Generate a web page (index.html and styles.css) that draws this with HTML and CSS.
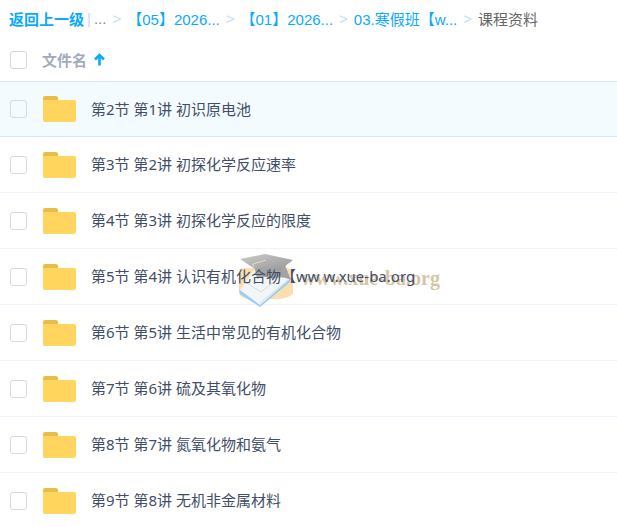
FILE: index.html
```
<!DOCTYPE html>
<html lang="zh-CN">
<head>
  <meta charset="UTF-8">
  <title>课程资料</title>
  <link rel="stylesheet" href="styles.css">
</head>
<body>

  <svg class="sprite" aria-hidden="true">
    <symbol id="folder" viewBox="0 0 34 28">
      <path fill="#e9bd4b" d="M0 3q0-2 2-2h11q2 0 2 2v4H0z"/>
      <path fill="#ffd55e" d="M0 5h31q2 0 2 2v18q0 2-2 2H2q-2 0-2-2z"/>
    </symbol>
  </svg>

  <nav class="breadcrumb">
    <a class="back" href="#">返回上一级</a>
    <span class="divider">|</span>
    <span class="more">...</span>
    <span class="sep">&gt;</span>
    <a href="#">【05】2026...</a>
    <span class="sep">&gt;</span>
    <a href="#">【01】2026...</a>
    <span class="sep">&gt;</span>
    <a href="#">03.寒假班【w...</a>
    <span class="sep">&gt;</span>
    <span class="current">课程资料</span>
  </nav>

  <main class="files">
    <table>
      <thead>
        <tr>
          <th class="check"><input type="checkbox" aria-label="全选"></th>
          <th class="name" colspan="2">
            <button class="sort">文件名
              <svg width="11" height="13" viewBox="0 0 11 13"><path fill="none" stroke="#09aaff" stroke-width="2.6" d="M5.5 12.5V2M1 6.5l4.5-4.5 4.5 4.5"/></svg>
            </button>
          </th>
        </tr>
      </thead>
      <tbody>
        <tr class="active">
          <td class="check"><input type="checkbox" id="f1"></td>
          <td class="icon"><svg class="folder"><use href="#folder"/></svg></td>
          <td class="title"><label for="f1">第2节 第1讲 初识原电池</label></td>
        </tr>
        <tr>
          <td class="check"><input type="checkbox" id="f2"></td>
          <td class="icon"><svg class="folder"><use href="#folder"/></svg></td>
          <td class="title"><label for="f2">第3节 第2讲 初探化学反应速率</label></td>
        </tr>
        <tr>
          <td class="check"><input type="checkbox" id="f3"></td>
          <td class="icon"><svg class="folder"><use href="#folder"/></svg></td>
          <td class="title"><label for="f3">第4节 第3讲 初探化学反应的限度</label></td>
        </tr>
        <tr>
          <td class="check"><input type="checkbox" id="f4"></td>
          <td class="icon"><svg class="folder"><use href="#folder"/></svg></td>
          <td class="title"><label for="f4">第5节 第4讲 认识有机化合物【ww w.xue-ba.org</label></td>
        </tr>
        <tr>
          <td class="check"><input type="checkbox" id="f5"></td>
          <td class="icon"><svg class="folder"><use href="#folder"/></svg></td>
          <td class="title"><label for="f5">第6节 第5讲 生活中常见的有机化合物</label></td>
        </tr>
        <tr>
          <td class="check"><input type="checkbox" id="f6"></td>
          <td class="icon"><svg class="folder"><use href="#folder"/></svg></td>
          <td class="title"><label for="f6">第7节 第6讲 硫及其氧化物</label></td>
        </tr>
        <tr>
          <td class="check"><input type="checkbox" id="f7"></td>
          <td class="icon"><svg class="folder"><use href="#folder"/></svg></td>
          <td class="title"><label for="f7">第8节 第7讲 氮氧化物和氨气</label></td>
        </tr>
        <tr>
          <td class="check"><input type="checkbox" id="f8"></td>
          <td class="icon"><svg class="folder"><use href="#folder"/></svg></td>
          <td class="title"><label for="f8">第9节 第8讲 无机非金属材料</label></td>
        </tr>
      </tbody>
    </table>

    <div class="watermark">
      <svg width="56" height="54" viewBox="0 0 56 54">
        <defs>
          <linearGradient id="cap" x1="0" y1="0" x2="1" y2="1">
            <stop offset="0" stop-color="#c0c0c0"/>
            <stop offset="1" stop-color="#7c7c7c"/>
          </linearGradient>
        </defs>
        <path fill="#fbd69c" d="M0 17q1-3 5-3h44q5 2 5 8v18q-4 4-14 5H10q-10-1-10-7z"/>
        <path fill="#7fc3ec" d="M0 35l1 5 20 13 30-25v-4L21 49z"/>
        <path fill="#f1f4f6" d="M1 36l14-20 36 9-30 26z"/>
        <path fill="none" stroke="#cbd5dc" d="M21 49l28-23M8 29l14 9 20-16"/>
        <path fill="#8d8d8d" d="M15 11q13-4 31 0l6 15q-9-5-18-1-8-4-16 0z"/>
        <path fill="url(#cap)" d="M1 5L26 0l28 6-13 10q-12-4-25-1z"/>
        <path fill="none" stroke="#e7d3a6" d="M27 6L14 10v7"/>
      </svg>
      <span>www.xue-ba.org</span>
    </div>
  </main>

</body>
</html>
```
FILE: styles.css
```
* {
  box-sizing: border-box;
}
body {
  margin: 0;
  background: #fff;
  color: #424e67;
  font-family: "Noto Sans", "Noto Sans CJK SC", sans-serif;
  font-size: 15px;
  overflow: hidden;
}
a {
  color: #09aaff;
  text-decoration: none;
}
.sprite {
  display: none;
}

.breadcrumb {
  display: flex;
  align-items: center;
  gap: 6px;
  height: 38px;
  padding: 0 9px 2px;
  font-family: "Liberation Sans", "Noto Sans CJK SC", sans-serif;
  white-space: nowrap;
}
.back {
  font-weight: bold;
}
.divider {
  margin: 0 -3px;
  color: #c4dbfe;
}
.more {
  color: #888;
}
.sep {
  color: #c4dbfe;
}
.current {
  color: #666;
}

.files {
  position: relative;
}
table {
  width: 100%;
  border-collapse: separate;
  border-spacing: 0;
}
th,
td {
  padding: 0;
  text-align: left;
}
th {
  height: 43px;
}
td {
  height: 56px;
  border-bottom: 1px solid #edf4fd;
}
.active td {
  background: #f4fbff;
  border-top: 1px solid #d3eafa;
  border-bottom-color: #d3eafa;
}
.check {
  width: 42px;
  padding-left: 10px;
}
.icon {
  width: 49px;
  padding-left: 1px;
}
.title {
  padding-bottom: 2px;
}
.name {
  padding-bottom: 1px;
}
input[type="checkbox"] {
  display: block;
  appearance: none;
  width: 17px;
  height: 18px;
  margin: 0;
  border: 1px solid #d3d9e6;
  border-radius: 3px;
}
.sort {
  display: flex;
  align-items: center;
  gap: 7px;
  padding: 0;
  border: 0;
  background: none;
  color: #a2abbd;
  font: inherit;
  font-weight: bold;
  cursor: pointer;
}
.folder {
  display: block;
  width: 34px;
  height: 28px;
}

.watermark {
  position: absolute;
  top: 216px;
  left: 239px;
  display: flex;
  align-items: center;
  gap: 6px;
  color: #d0b78f;
  font-family: "Liberation Serif", serif;
  font-size: 20px;
  font-weight: bold;
  opacity: 0.8;
  pointer-events: none;
}
.watermark span {
  padding-bottom: 6px;
}
.title label {
  position: relative;
  z-index: 1;
}
```
